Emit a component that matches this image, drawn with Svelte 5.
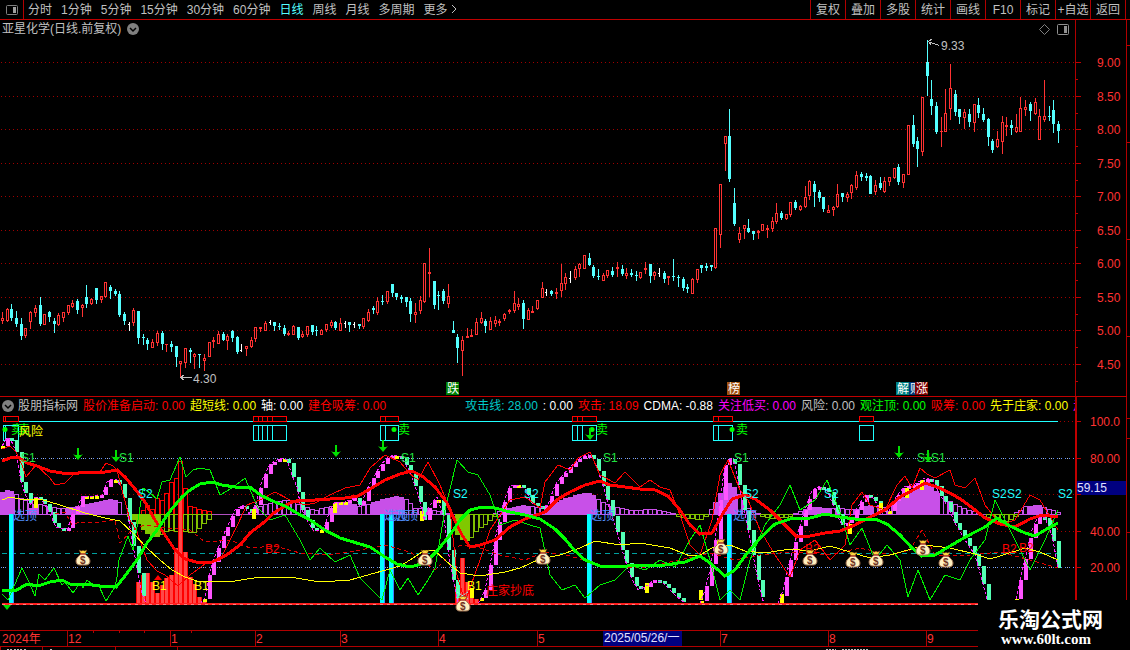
<script lang="ts">
  type Point = [number, number]
  type Candle = { x: number; high: number; top: number; bottom: number; low: number; kind: string }

  const periods = ['分时', '1分钟', '5分钟', '15分钟', '30分钟', '60分钟', '日线', '周线', '月线', '多周期', '更多']
  const tools = ['复权', '叠加', '多股', '统计', '画线', 'F10', '标记', '+自选', '返回']
  let active = $state('日线')

  const legend = [
    ['股价准备启动: 0.00', '#ff0000'],
    ['超短线: 0.00', '#ffff00'],
    ['轴: 0.00', '#ffffff'],
    ['建仓吸筹: 0.00', '#ff0000'],
    ['攻击线: 28.00', '#00c8c8'],
    [': 0.00', '#ffffff'],
    ['攻击: 18.09', '#ff0000'],
    ['CDMA: -0.88', '#ffffff'],
    ['关注低买: 0.00', '#ff00ff'],
    ['风险: 0.00', '#c0c0c0'],
    ['观注顶: 0.00', '#00ff00'],
    ['吸筹: 0.00', '#ff0000'],
    ['先于庄家: 0.00', '#ffff00'],
    ['走', '#ff00ff']
  ]

  // high, body top, body bottom, low, kind: r = up, c = down, w = unchanged
  const quotes = `
    312 318 321 324 r;308 309 321 322 r;304 309 318 321 c;311 318 324 327 c;318 324 336 340 c;328 328 336 338 r;
    311 312 322 329 r;305 308 313 317 r;297 305 324 326 c;314 314 325 325 r;311 312 317 322 c;318 321 324 333 c;
    313 315 325 326 r;312 312 318 322 r;305 305 313 315 r;300 303 307 308 r;299 301 310 314 c;304 305 308 317 r;
    285 297 304 308 c;298 299 304 305 r;288 288 300 304 c;296 296 300 303 r;282 282 297 298 r;285 287 291 299 c;
    289 291 294 296 c;291 294 315 317 c;312 314 321 325 c;322 324 325 331 w;308 310 323 326 r;311 311 338 344 c;
    334 337 338 345 c;338 340 344 350 c;339 342 348 348 r;331 333 343 346 r;331 333 344 350 c;344 344 345 352 r;
    341 344 347 352 c;346 346 357 367 c;361 361 364 377 r;348 348 363 368 r;348 350 352 363 c;353 354 357 369 r;
    354 354 355 368 c;354 358 361 371 r;342 342 357 357 r;337 340 342 348 r;331 334 344 344 r;332 334 340 341 c;
    334 336 341 350 r;330 331 338 342 c;336 337 352 354 c;344 350 351 352 w;346 346 349 356 r;337 340 347 348 r;
    327 327 339 342 r;327 327 329 332 r;321 323 331 331 r;320 322 323 325 w;322 322 326 331 c;323 326 327 330 c;
    325 328 334 336 c;331 333 335 336 r;325 326 335 335 r;327 327 338 340 c;331 334 337 338 r;326 326 335 337 r;
    325 325 332 335 c;326 330 331 336 c;329 330 335 335 r;324 324 330 332 r;320 322 326 328 r;321 322 328 330 c;
    318 323 331 331 r;321 323 324 328 w;322 322 325 332 c;322 324 325 328 w;324 324 326 329 c;318 318 327 329 r;
    309 312 321 322 r;306 308 310 314 c;297 301 313 315 r;295 301 302 305 c;291 291 302 304 r;284 284 293 297 c;
    293 293 297 300 c;295 297 299 303 c;297 297 302 307 c;298 301 314 322 c;303 312 315 323 r;296 300 311 314 r;
    263 263 302 303 r;248 272 274 297 r;281 281 305 309 c;291 295 296 310 c;289 291 301 304 c;284 296 304 308 r;
    321 330 333 333 c;334 337 348 363 c;336 340 351 376 r;328 336 338 338 r;329 335 337 337 r;318 322 335 335 r;
    312 318 323 324 r;319 321 326 333 c;317 321 330 330 r;316 320 324 327 r;319 321 323 326 r;313 314 319 321 r;
    309 310 312 314 r;291 303 311 313 r;298 304 307 310 r;300 303 319 329 c;308 310 320 320 r;306 311 313 313 r;
    300 300 309 310 r;282 288 298 298 r;289 292 293 296 w;290 291 294 296 c;288 292 294 299 r;264 283 291 297 r;
    273 277 284 290 r;271 278 279 283 w;266 269 278 280 r;263 264 269 277 r;255 255 269 269 r;253 258 265 266 c;
    265 267 276 278 c;269 276 277 280 c;273 275 281 281 r;270 270 276 278 r;267 271 275 277 c;262 267 269 277 r;
    265 269 274 276 c;268 273 276 279 r;269 273 275 277 c;271 275 276 281 c;272 272 278 279 r;262 268 270 274 r;
    264 264 276 283 c;271 272 276 280 r;268 273 274 277 w;271 273 279 283 c;276 276 278 285 r;259 276 277 281 c;
    275 277 278 287 c;277 279 288 291 c;284 287 289 293 c;278 279 294 294 r;269 269 280 283 r;265 265 268 273 c;
    263 266 268 271 c;265 265 267 271 c;228 228 268 269 r;184 184 235 248 r;136 136 144 171 r;109 136 179 182 c;
    188 203 224 226 c;227 233 240 243 r;225 225 229 239 r;219 228 232 233 c;231 231 234 240 c;230 231 233 239 r;
    224 224 231 231 r;225 228 230 238 r;217 221 229 232 r;203 213 222 224 r;211 213 218 220 c;214 214 219 220 r;
    202 202 215 217 r;200 202 208 210 c;205 206 210 211 r;186 197 207 208 r;180 181 196 200 r;181 184 192 207 c;
    190 192 198 202 c;197 197 209 212 c;205 210 213 213 r;206 207 210 216 r;184 194 207 208 r;193 193 197 202 c;
    192 194 198 202 r;184 185 193 199 r;171 175 188 190 r;172 174 177 181 c;173 176 178 181 c;175 176 194 194 c;
    180 185 192 195 r;177 183 188 190 c;177 181 192 193 r;177 177 182 186 r;168 168 178 179 r;164 167 182 185 c;
    174 174 183 188 r;125 125 175 175 r;115 125 144 147 c;137 141 149 167 c;97 97 152 156 r;40 62 76 96 c;
    80 99 106 115 c;102 106 132 134 c;117 131 132 147 r;89 113 132 132 r;64 88 109 120 r;90 94 112 116 c;
    109 109 117 124 c;109 112 118 129 r;109 114 122 127 c;104 104 123 132 r;98 105 113 118 c;108 114 120 122 c;
    118 119 137 146 c;139 141 150 153 c;131 139 147 148 r;116 122 142 154 r;117 125 127 136 r;120 125 128 135 c;
    114 127 132 133 r;97 108 132 132 r;100 107 110 116 r;102 104 111 121 c;98 102 114 115 r;109 116 140 140 r;
    80 116 120 122 r;106 116 117 121 c;100 110 124 133 c;121 124 131 143 c`

  const barX = (i: number) => Math.round(2 + (i * 1056) / 225)

  const candles: Candle[] = quotes.split(';').map((row, i) => {
    const [high, top, bottom, low, kind] = row.trim().split(' ')
    return { x: barX(i), high: +high, top: +top, bottom: +bottom, low: +low, kind }
  })
  const candleColor: Record<string, string> = { r: '#ff3232', c: '#54ffff', w: '#ffffff' }

  const priceTicks = [62, 96, 129, 163, 196, 230, 263, 297, 330, 364].map((y, i) => ({
    y,
    label: (9 - i * 0.5).toFixed(2)
  }))

  function parse(s: string): Point[] {
    return s.trim().split(/\s+/).map((p) => p.split(',').map(Number) as Point)
  }

  function valueAt(points: Point[], x: number): number | null {
    for (let k = 1; k < points.length; k++) {
      const [x0, y0] = points[k - 1]
      const [x1, y1] = points[k]
      if (x >= x0 && x <= x1) return Math.round(y0 + ((y1 - y0) * (x - x0)) / (x1 - x0))
    }
    return null
  }

  // Hollow or solid columns standing on (or hanging from) a base line
  function columns(runs: string[], base: number) {
    return runs.flatMap((run) => {
      const pts = parse(run)
      return candles.flatMap(({ x }) => {
        const v = valueAt(pts, x)
        return v === null || v === base ? [] : [{ x: x - 2, y: Math.min(v, base), h: Math.abs(v - base) }]
      })
    })
  }

  const redThick = '2,461 10,458 18,457 27,463 37,466 50,471 62,473 72,474 85,472 105,472 117,470 125,477 135,489 145,502 155,520 165,535 175,550 185,559 200,563 212,562 225,556 240,545 250,533 262,524 275,512 290,503 300,500 315,500 330,499 345,498 358,496 370,489 385,480 400,474 412,471 422,476 435,487 447,503 455,521 462,535 470,547 480,545 495,540 510,527 525,519 545,512 558,499 570,492 585,485 600,481 610,485 625,487 640,489 655,490 668,496 680,510 690,525 700,534 712,533 722,515 732,499 745,495 755,499 770,510 785,525 797,537 810,536 825,533 840,531 855,525 870,517 885,510 900,497 915,489 925,483 937,487 950,493 962,500 975,510 985,518 1000,524 1015,527 1030,519 1042,515 1058,517'
  const greenThick = '2,590 15,591 27,584 38,586 50,582 62,580 72,585 85,584 100,586 116,587 125,576 137,560 147,543 157,530 170,511 182,497 190,490 200,484 212,482 222,485 235,487 250,487 262,496 275,502 285,506 297,513 310,520 325,530 340,538 350,541 370,547 385,557 397,564 410,567 425,563 437,551 450,535 460,520 470,510 482,507 495,508 510,512 525,515 540,519 555,529 565,539 575,551 585,560 600,566 615,567 640,565 665,565 685,562 700,556 710,563 725,576 735,570 745,556 760,538 775,524 790,519 810,518 825,514 840,517 855,519 875,519 887,524 900,535 912,548 922,556 935,555 950,546 962,539 975,532 985,527 997,518 1010,526 1025,533 1035,536 1045,530 1058,523'
  const yellowThin = '2,500 10,497 25,500 40,499 60,505 85,513 105,518 120,521 133,533 147,548 160,560 172,570 185,577 197,581 215,582 235,581 260,577 290,577 320,582 350,580 375,573 400,566 410,560 425,550 435,551 445,560 460,573 480,576 505,572 520,568 540,559 560,555 580,548 595,541 620,545 640,543 670,548 690,556 700,555 712,548 730,545 745,551 765,553 790,549 810,551 830,546 850,552 870,558 890,555 915,548 925,545 950,548 975,554 990,559 1000,556 1025,548 1040,552 1058,560'
  const redThin = '2,449 10,446 16,452 22,465 26,477 36,465 50,478 55,485 65,483 75,473 85,472 100,472 106,463 113,466 117,470 122,490 130,520 137,532 147,560 157,571 165,575 178,586 190,575 205,564 220,560 235,530 247,505 260,500 275,492 290,500 305,505 315,503 330,495 345,488 360,485 370,468 385,455 400,462 410,474 418,480 428,462 440,485 450,510 457,575 465,602 480,560 490,530 500,515 510,500 525,497 540,508 545,482 558,465 570,470 578,458 590,452 600,475 615,483 625,472 640,487 650,480 660,487 670,490 680,515 690,545 700,555 712,520 720,475 728,460 740,490 748,500 760,530 775,555 790,577 800,550 815,540 830,560 845,545 852,505 862,492 870,505 885,510 897,485 905,476 912,488 920,468 927,474 935,478 950,470 955,485 965,488 975,478 985,505 1000,525 1015,520 1030,495 1040,500 1058,530'
  const greenThin = '2,594 8,600 22,568 28,580 35,596 39,574 45,580 54,568 62,585 65,582 73,593 80,583 83,588 87,580 92,584 98,584 106,601 115,587 117,577 119,560 128,536 133,550 137,527 143,488 150,493 157,499 162,482 170,480 180,457 186,477 193,470 200,468 210,470 220,495 232,488 245,478 258,508 270,520 285,515 300,540 310,560 320,548 335,562 350,555 360,578 372,590 382,600 390,570 400,590 408,578 418,595 428,580 435,568 445,510 457,460 468,472 478,475 490,495 500,525 515,520 530,525 540,528 550,575 562,590 575,585 585,598 600,585 615,580 630,565 645,570 660,560 675,567 690,540 700,525 710,560 720,600 730,590 740,600 750,560 765,525 780,505 790,485 800,510 815,500 827,480 840,512 850,545 862,528 875,560 887,545 900,560 908,597 918,570 930,600 945,575 960,580 970,560 985,540 995,500 1010,530 1030,570 1045,540 1058,510'
  const redDashed = '55,514 65,512 72,525 80,522 95,523 115,520 120,543 132,530 145,525 165,528 190,530 205,542 230,540 250,548 275,546 300,553 330,555 360,550 385,545 410,552 435,570 460,545 480,548 500,555 525,560 545,552 570,556 600,565 640,568 680,560 710,553 735,560 760,555 790,552 830,555 860,548 890,555 910,550 922,530 935,555 960,556 1000,552 1030,560 1058,568'

  const waves = [
    '2,446 7,438 11,440 16,452 21,482 26,496 31,505 35,497 42,500 50,514 56,527 62,529 68,528 72,514 78,506 82,496 95,496 102,495 107,482 112,479 117,480 121,487 127,508 131,535 136,562 141,590 146,604',
    '200,604 205,598 209,575 215,556 222,538 228,525 235,510 243,505 250,515 256,503 262,480 270,464 280,458 287,460 292,475 297,487 301,508 307,520 313,530 320,531 325,525 330,510 335,502 345,502 355,498 361,508 366,490 372,480 380,466 387,458 393,455 401,457 408,468 413,480 419,498 424,520 430,505 437,497 444,518 448,550 453,580 458,602',
    '478,604 485,590 490,565 497,530 503,505 510,485 518,485 526,490 531,502 540,508 548,505 555,485 562,476 572,465 580,458 588,454 594,460 602,482 610,510 615,525 622,550 630,575 638,590 648,585 654,580 662,582 668,588 676,596 686,604',
    '700,604 705,590 710,570 715,540 720,500 725,465 730,458 735,465 742,500 748,530 754,560 760,590 764,604',
    '778,604 783,590 790,560 797,535 805,510 812,490 820,486 828,492 835,510 842,525 850,522 857,508 865,495 873,498 881,510 888,513 896,497 904,487 915,484 925,478 933,480 940,495 947,505 955,523 965,540 975,555 982,580 988,604',
    '1015,604 1020,580 1026,555 1032,530 1038,517 1045,518 1052,535 1058,568'
  ]

  const steps = waves.flatMap((wave) => {
    const pts = parse(wave)
    let prev: number | null = null
    return candles.flatMap(({ x }) => {
      const v = valueAt(pts, x)
      if (v === null) return []
      const from = prev ?? v
      prev = v
      const color = v === from ? '#ffff00' : v < from ? '#ff54ff' : '#54ffb4'
      return [{ x: x - 1, y: Math.min(v, from), h: Math.max(3, Math.abs(v - from)), color }]
    })
  })

  const purpleRuns = [
    '2,492 8,489 14,492 20,497 30,503 45,505 60,508 80,506 95,502 110,499 118,500 124,514',
    '250,513 260,506 275,501 290,500 300,505 315,510 330,506 345,502 360,506 380,500 395,496 405,498 415,508 425,507 440,512 450,513',
    '495,513 505,509 520,505 545,508 560,500 575,495 588,492 597,498 610,506 630,510 655,509 675,513',
    '708,513 714,505 722,490 730,482 738,492 748,508 758,513',
    '795,513 810,507 830,508 855,509 870,505 885,507 900,499 912,490 925,480 937,492 948,500 960,507 980,513',
    '1015,513 1025,506 1040,505 1058,512'
  ]
  const purpleSolidRuns = [
    '2,492 8,489 14,492',
    '26,508 37,508',
    '64,507 82,506 96,502 110,499 118,500',
    '334,505 345,502 358,505',
    '370,503 395,496 402,498',
    '505,509 520,505 530,506',
    '545,508 560,500 588,492 594,496',
    '712,507 722,490 730,482 738,492',
    '808,508 832,508',
    '862,507 872,505',
    '896,501 905,496 925,480 937,492',
    '1030,506 1042,505'
  ]
  const oliveSolidRuns = ['127,516 135,521 143,530 150,537 157,537', '455,530 459,540 468,541']
  const oliveRuns = [
    '160,535 168,530 180,531 195,532 203,524 212,517',
    '468,540 475,532 485,524 495,516',
    '675,516 690,518 700,520 706,516',
    '760,516 775,518 790,516',
    '985,516 1000,522 1010,520 1016,516'
  ]
  const purple = columns(purpleRuns, 514)
  const purpleSolid = columns(purpleSolidRuns, 514)
  const oliveSolid = columns(oliveSolidRuns, 514)
  const olive = columns(oliveRuns, 514)
  const redSolid = columns(
    ['136,586 141,576 148,573 154,586 158,595 163,582 168,576 172,574 176,548 180,500 185,552 190,577 196,588 200,600 205,603', '457,586 460,560 464,556 468,590 474,598 480,602'],
    604
  )
  const redHollow = columns(['143,510 148,504 153,510 158,495 163,501 168,487 172,480 176,478 180,461 185,488 190,506 200,509 212,512'], 514)

  const signalBoxes = [
    { x: 3, w: 16, splits: [5] },
    { x: 253, w: 34, splits: [258, 262, 267, 272] },
    { x: 380, w: 19, splits: [385] },
    { x: 572, w: 25, splits: [577, 582] },
    { x: 713, w: 20, splits: [718] },
    { x: 859, w: 15, splits: [] }
  ]
  const cyanBars = [9, 380, 389, 587, 727]
  const yellowBars: Point[] = [[34, 498], [252, 509], [333, 503], [420, 511], [470, 588], [645, 583], [699, 590], [717, 541], [780, 594], [848, 524], [879, 503], [905, 488], [920, 480]]
  const downArrows: Point[] = [[78, 448], [116, 450], [336, 445], [383, 440], [590, 428], [899, 446], [928, 450]]
  const bags: Point[] = [[83, 558], [425, 558], [463, 604], [543, 557], [721, 547], [810, 558], [853, 560], [876, 559], [923, 548], [946, 560]]

  const marks: { text: string; color: string; at: Point[] }[] = [
    { text: 'S1', color: '#20e040', at: [[21, 462], [119, 462], [401, 462], [603, 462], [734, 462], [917, 462], [931, 462]] },
    { text: 'S2', color: '#20ffff', at: [[138, 498], [453, 498], [524, 498], [744, 498], [824, 498], [992, 498], [1007, 498], [1058, 498]] },
    { text: 'B1', color: '#ffff00', at: [[152, 590], [194, 590], [467, 590]] },
    { text: 'B2', color: '#ff0000', at: [[265, 553], [805, 553], [1002, 553], [1019, 552]] },
    { text: '选顶', color: '#5090ff', at: [[13, 520], [384, 520], [394, 520], [590, 520], [733, 520]] },
    { text: '卖', color: '#00ff00', at: [[11, 434], [18, 434], [398, 434], [596, 434], [736, 434]] },
    { text: '风险', color: '#ffff00', at: [[19, 436]] },
    { text: '庄家抄底', color: '#ff0000', at: [[486, 595]] }
  ]

  const chips = [
    { x: 446, text: '跌', fill: '#008000' },
    { x: 727, text: '榜', fill: '#a05010' },
    { x: 909, text: '财', fill: '#003878' },
    { x: 896, text: '解', fill: '#008080' },
    { x: 915, text: '涨', fill: '#800000' }
  ]

  const scale = [
    { y: 421, label: '100.0' },
    { y: 458, label: '80.00' },
    { y: 494, label: '60.00' },
    { y: 531, label: '40.00' },
    { y: 567, label: '20.00' }
  ]

  const months = [
    { x: 67, label: '12' },
    { x: 170, label: '1' },
    { x: 255, label: '2' },
    { x: 340, label: '3' },
    { x: 438, label: '4' },
    { x: 537, label: '5' },
    { x: 720, label: '7' },
    { x: 828, label: '8' },
    { x: 926, label: '9' }
  ]
</script>

{#snippet box(c: { x: number; y: number; h: number }, stroke: string)}
  <rect x={c.x + 0.5} y={c.y + 0.5} width="4" height={c.h} fill="none" {stroke} />
{/snippet}

{#snippet chevron()}
  <svg width="12" height="12" viewBox="0 0 12 12"><circle cx="6" cy="6" r="6" fill="#808080" /><path d="M3 5l3 3 3-3" fill="none" stroke="#000" stroke-width="1.5" /></svg>
{/snippet}

<div class="page">
  <nav>
    <button class="layout" aria-label="布局">
      <svg width="12" height="12" viewBox="0 0 12 12"><rect x=".5" y="1.5" width="11" height="9" rx="1" fill="none" stroke="#808080" /><path d="M7 3h3v6H7z" fill="#a0a0a0" /></svg>
    </button>
    <div class="periods">
      {#each periods as p (p)}
        <button class:active={active === p} onclick={() => (active = p)}>
          {p}
          {#if p === '更多'}
            <svg width="7" height="10" viewBox="0 0 7 10"><path d="M1 1l4 4-4 4" fill="none" stroke="currentColor" /></svg>
          {/if}
        </button>
      {/each}
    </div>
    <div class="tools">
      {#each tools as t (t)}
        <button>{t}</button>
      {/each}
    </div>
  </nav>

  <header class="title">
    <h1>亚星化学(日线.前复权)</h1>
    <button aria-label="展开">{@render chevron()}</button>
    <div class="view">
      <svg width="11" height="11" viewBox="0 0 11 11"><path d="M5.500 .5l5 5-5 5-5-5z" fill="none" stroke="#808080" /></svg>
      <svg width="12" height="11" viewBox="0 0 12 11"><rect x=".5" y=".5" width="11" height="10" rx="1" fill="none" stroke="#909090" /><path d="M7 2h3v7H7z" fill="#909090" /></svg>
    </div>
    <div class="gutter"></div>
  </header>

  <svg class="chart" viewBox="0 38 1130 359" role="img" aria-label="日线 K线图">
    <g shape-rendering="crispEdges">
      {#each priceTicks as t (t.y)}
        <path d="M1 {t.y + 0.5}H1075" stroke="#a00000" stroke-dasharray="1 3" />
        <path d="M1076 {t.y + 0.5}h5M1076 {t.y + 17.5}h2" stroke="#c00000" />
      {/each}
      {#each candles as c (c.x)}
        {@const color = candleColor[c.kind]}
        {#if c.kind === 'r'}
          <path d="M{c.x + 0.5} {c.high}V{c.top}M{c.x + 0.5} {c.bottom}V{c.low}" stroke={color} />
          {#if c.bottom - c.top < 2}
            <rect x={c.x - 1} y={c.top} width="3" height="1" fill={color} />
          {:else}
            <rect x={c.x - 0.5} y={c.top + 0.5} width="2" height={c.bottom - c.top - 1} fill="none" stroke={color} />
          {/if}
        {:else}
          <rect x={c.x} y={c.high} width="1" height={c.low - c.high} fill={color} />
          <rect x={c.x - 1} y={c.top} width={c.kind === 'w' ? 2 : 3} height={c.bottom - c.top} fill={color} />
        {/if}
      {/each}
      <path d="M1075.500 38V397M1126.500 38V397" stroke="#b00000" />
      <path d="M0 396.500H1127M1127 45.500h3M1127 142.500h3M1127 239.500h3M1127 336.500h3" stroke="#c00000" />
      <path d="M180 377.500h12M184.500 374.500l-4 3 4 3M928 41.500l11 4M932.500 38.500l-4 3 3 4" fill="none" stroke="#c0c0c0" />
    </g>
    <text x="193" y="383" fill="#c0c0c0">4.30</text>
    <text x="941" y="50" fill="#c0c0c0">9.33</text>
    {#each priceTicks as t (t.y)}
      <text x="1097" y={t.y + 5} fill="#ff3232">{t.label}</text>
    {/each}
    {#each chips as chip (chip.text)}
      <rect x={chip.x} y="382" width="13" height="13" fill={chip.fill} />
      <text x={chip.x + 1} y="393" fill="#fff">{chip.text}</text>
    {/each}
  </svg>

  <div class="legend">
    <button aria-label="指标菜单">{@render chevron()}</button>
    <div class="values">
      <span>股朋指标网</span>
      {#each legend as [text, color], i (i)}
        <span class:spaced={i === 4} style:color>{text}</span>
      {/each}
    </div>
    <div class="gutter wide"></div>
  </div>

  <svg class="chart" viewBox="0 414 1130 216" role="img" aria-label="指标图">
    <defs>
      <g id="bag">
        <path d="M-4-8l3 1 1-1 1 1 3-1-2 4h-4z" fill="#ffd840" stroke="#603010" stroke-width=".5" />
        <path d="M-2-4h4c2 2 5 4 5 7 0 3-2 4-4 4h-6c-2 0-4-1-4-4 0-3 3-5 5-7z" fill="#fff0c0" stroke="#a07050" />
        <path d="M-3-4h6" stroke="#b02020" />
        <text x="-3" y="6" class="coin">$</text>
      </g>
      <g id="down">
        <path d="M0 0v7" stroke="#00e000" stroke-width="2" />
        <path d="M-5 6l2 1h6l2-1-5 6z" fill="#00e000" />
      </g>
    </defs>

    <g shape-rendering="crispEdges">
      <path d="M3 421.500H1058" stroke="#20ffff" />
      <path d="M1 458.500H1075M1 567.500H1075" stroke="#6090ff" stroke-dasharray="1 3" />
      <path d="M3 458.500H1075M3 567.500H1075" stroke="#c0c0c0" stroke-dasharray="1 7" />
      <path d="M1 494.500H1075M1 531.500H1075M1060 421.500H1075" stroke="#a00000" stroke-dasharray="1 3" />
      <path d="M2 553.500H1058" stroke="#00a0a0" stroke-dasharray="5 4" />
      <path d="M2 514.500H1058" stroke="#b050c0" />

      {#each signalBoxes as s (s.x)}
        <rect x={s.x + 0.5} y="416.500" width={s.w - 1} height="5" fill="#000" stroke="#ff0000" />
        <rect x={s.x + 0.5} y="425.500" width={s.w - 1} height="15" fill="none" stroke="#20ffff" />
        {#each s.splits as x (x)}
          <path d="M{x + 0.5} 417v4" stroke="#ff0000" />
          <path d="M{x + 0.5} 425v15" stroke="#20ffff" />
        {/each}
      {/each}

      {#each redHollow as c (c.x)}{@render box(c, '#ff0000')}{/each}
      {#each purple as c (c.x)}{@render box(c, '#c850e8')}{/each}
      {#each purpleSolid as c (c.x)}
        <rect x={c.x} y={c.y} width="5" height={c.h} fill="#c850e8" />
      {/each}
      {#each olive as c (c.x)}{@render box(c, '#80c000')}{/each}
      {#each oliveSolid as c (c.x)}
        <rect x={c.x} y={c.y} width="5" height={c.h} fill="#80c800" />
      {/each}
      {#each cyanBars as x (x)}
        <rect {x} y="514" width="4" height="90" fill="#00ffff" />
        <path d="M{x + 4.5} 514v90" stroke="#4080ff" />
      {/each}
      {#each redSolid as c (c.x)}
        <rect x={c.x} y={c.y} width="5" height={c.h} fill="#ff0000" />
        <rect x={c.x + 1} y={c.y} width="3" height={c.h} fill="#ff4848" />
      {/each}
      {#each steps as s, i (i)}
        <rect x={s.x} y={s.y} width="4" height={s.h} fill={s.color} />
      {/each}
      {#each yellowBars as [x, y] (x)}
        <rect {x} {y} width="4" height="10" fill="#ffff00" />
      {/each}
    </g>

    <g fill="none" shape-rendering="crispEdges">
      {#each waves as wave (wave)}
        <polyline points={wave} stroke="#ff20ff" stroke-dasharray="3 2" />
      {/each}
      <polyline points={redDashed} stroke="#e00000" stroke-dasharray="4 3" />
      <polyline points={redThin} stroke="#ff0000" />
      <polyline points={greenThin} stroke="#00f000" />
      <polyline points={yellowThin} stroke="#ffff00" />
      <polyline points={redThick} stroke="#ff0000" stroke-width="3" />
      <polyline points={greenThick} stroke="#00ff00" stroke-width="3" />
      <path d="M2 604H1000" stroke="#ff2020" stroke-width="2" />
      <path d="M2 604.500H1000" stroke="#ff8080" stroke-dasharray="3 4" />
    </g>

    {#each marks as m (m.text)}
      {#each m.at as [x, y] (x)}
        <text {x} {y} fill={m.color}>{m.text}</text>
      {/each}
    {/each}
    {#each [5, 394, 592, 732] as x (x)}
      <circle cx={x} cy="429.500" r="2.500" fill="#00ff00" />
    {/each}
    {#each downArrows as [x, y] (x)}<use href="#down" {x} {y} />{/each}
    <path d="M3 605l4 5 4-5z" fill="#00e000" />
    <path d="M154 580l4-5 4 5z" fill="#ff0000" />
    <path d="M457 592l11 7M468 592l-11 7" stroke="#80ffff" stroke-dasharray="2 1" />
    {#each bags as [x, y] (x)}<use href="#bag" {x} {y} />{/each}

    <g shape-rendering="crispEdges">
      <rect x="1077" y="481" width="49" height="14" fill="#000080" />
      <path d="M1076 414V630" stroke="#c00000" stroke-width="2" />
      <path d="M1126.500 414V630" stroke="#b00000" />
      {#each scale as s (s.y)}
        <path d="M1077 {s.y + 0.5}h4" stroke="#c00000" />
      {/each}
      <path d="M1127 418.500h3M1127 438.500h3M1127 532.500h3" stroke="#b00000" />
    </g>
    {#each scale as s (s.y)}
      {#if s.label !== '60.00'}
        <text x="1090" y={s.y + 5} fill="#ff3232">{s.label}</text>
      {/if}
    {/each}
    <text x="1077" y="492" fill="#e0e0ff">59.15</text>
  </svg>

  <svg class="chart" viewBox="0 630 1130 20" role="img" aria-label="时间轴">
    <g shape-rendering="crispEdges" stroke="#b00000">
      <path d="M0 630.500H1130M0 646.500H1130M0.500 647v3M42.500 647v3M115.500 647v3M177.500 647v3M93.500 631v2M119.500 631v2M144.500 631v2M191.500 631v2" />
      {#each months as m (m.x)}
        <path d="M{m.x + 0.5} 631v15" />
      {/each}
    </g>
    <text x="2" y="643" fill="#ff3232">2024年</text>
    {#each months as m (m.x)}
      <text x={m.x + 1} y="643" fill="#ff3232">{m.label}</text>
    {/each}
    <rect x="603" y="631" width="79" height="15" fill="#000080" />
    <text x="604" y="642" fill="#e0e0ff">2025/05/26/一</text>
    <path d="M7 649.500h5M14 649.500h8M24 649.500h3M50 649.500h2M826 649.500h10M842 649.500h26" stroke="#c0c0c0" stroke-dasharray="2 1" />
  </svg>

  <div class="brand">
    <strong>乐淘公式网</strong>
    <a href="http://www.60lt.com">www.60lt.com</a>
  </div>
</div>

<style>
  :global(body) {
    margin: 0;
    background: #000;
  }
  .page {
    position: relative;
    display: flex;
    flex-direction: column;
    overflow: hidden;
    background: #000;
    color: #c0c0c0;
    font: 12px/16px 'Liberation Sans', 'Noto Sans CJK SC', sans-serif;
  }
  button {
    background: none;
    border: 0;
    padding: 0;
    color: inherit;
    font: inherit;
    white-space: nowrap;
    cursor: pointer;
  }
  nav {
    display: flex;
    height: 19px;
    border-bottom: 1px solid #c00000;
  }
  .layout {
    display: flex;
    align-items: center;
    justify-content: center;
    width: 24px;
    border-right: 1px solid #b00000;
  }
  .periods {
    display: flex;
    flex: 1;
    gap: 9px;
    padding-left: 4px;
  }
  .periods .active { color: #54ffff; }
  .tools {
    display: flex;
    margin-right: 4px;
    border-right: 1px solid #b00000;
  }
  .tools button {
    box-sizing: border-box;
    width: 35px;
    border-left: 1px solid #b00000;
  }
  .title {
    display: flex;
    align-items: center;
    gap: 6px;
    height: 18px;
    padding-left: 2px;
  }
  .title h1 {
    margin: 0;
    font: inherit;
  }
  .title button,
  .legend button {
    display: flex;
  }
  .view {
    display: flex;
    flex: 1;
    justify-content: flex-end;
    gap: 7px;
  }
  .gutter {
    align-self: stretch;
    width: 50px;
    margin-right: 3px;
    border: solid #b00000;
    border-width: 0 1px;
  }
  .gutter.wide {
    width: 49px;
    border-left-width: 2px;
  }
  .chart {
    display: block;
    width: 100%;
    height: auto;
  }
  .coin {
    font-size: 10px;
    font-weight: bold;
    fill: #703020;
  }
  .legend {
    display: flex;
    align-items: center;
    gap: 4px;
    height: 17px;
    padding-left: 2px;
  }
  .values {
    display: flex;
    flex: 1;
    gap: 5px;
    min-width: 0;
    overflow: hidden;
    white-space: nowrap;
  }
  .values span { flex: none; }
  .values .spaced { margin-left: 74px; }
  .legend .gutter {
    flex: none;
    margin-left: -4px;
  }
  .brand {
    position: absolute;
    right: 0;
    bottom: 0;
    display: flex;
    flex-direction: column;
    box-sizing: border-box;
    width: 152px;
    height: 50px;
    padding: 6px 0 0 20px;
    background: #000;
    color: #fff;
  }
  .brand strong {
    font: bold 21px/24px 'Noto Sans CJK SC', sans-serif;
  }
  .brand a {
    padding-left: 3px;
    color: inherit;
    font: bold 15px/18px 'Liberation Serif', serif;
    text-decoration: none;
  }
</style>
